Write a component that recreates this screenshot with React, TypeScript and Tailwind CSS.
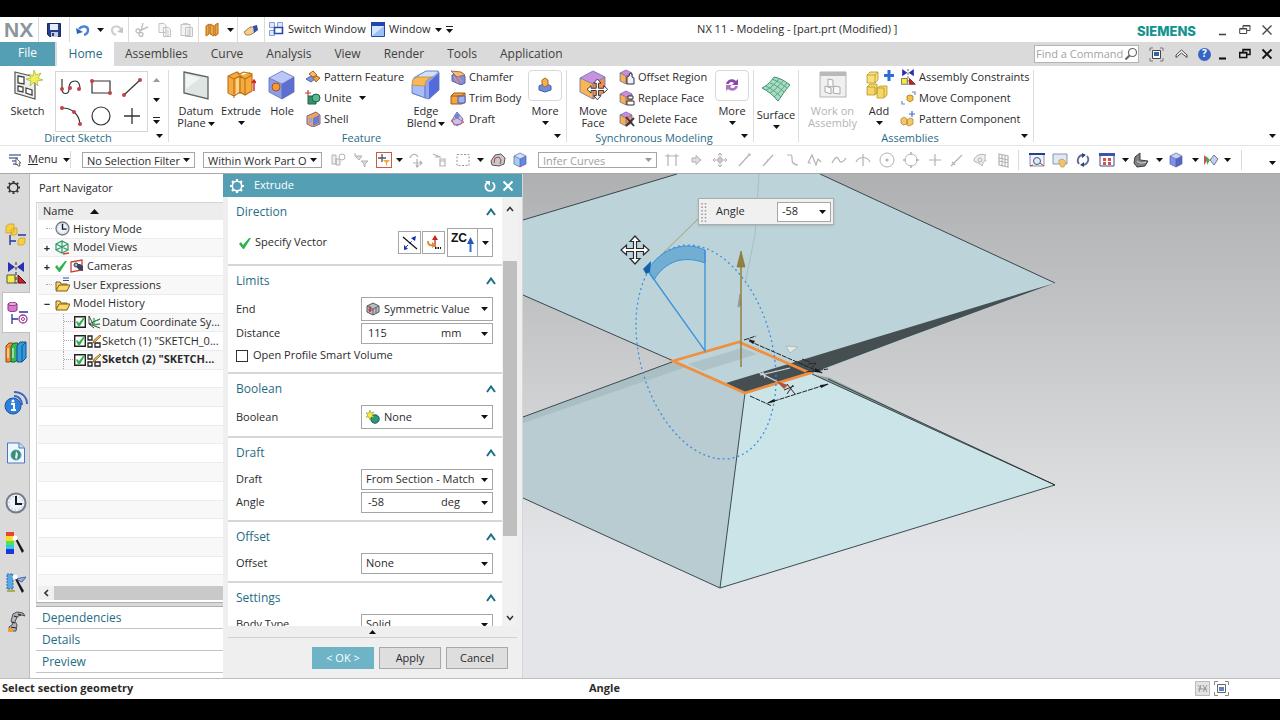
import { useState } from "react";
import type { ReactNode } from "react";

type IconProps = { w?: number; h?: number; children: ReactNode };

function Svg({ w = 16, h = 16, children }: IconProps) {
  return (
    <svg width={w} height={h} viewBox={`0 0 ${w} ${h}`} fill="none" className="shrink-0" aria-hidden="true">
      {children}
    </svg>
  );
}

function Caret({ up = false, muted = false }: { up?: boolean; muted?: boolean }) {
  return (
    <Svg w={7} h={4}>
      <path d={up ? "M0 4h7L3.500 0z" : "M0 0h7L3.500 4z"} fill={muted ? "#999" : "#111"} />
    </Svg>
  );
}

function Overflow() {
  return (
    <Svg w={7} h={7}>
      <path d="M0 .5h7" stroke="#222" />
      <path d="M0 3h7L3.500 7z" fill="#111" />
    </Svg>
  );
}

const cube = (top: string, left: string, right: string) => (
  <>
    <path d="M2 8 15 1l12 6-12 7z" fill={top} />
    <path d="M2 8l13 6v15L2 22z" fill={left} />
    <path d="M27 7l-12 7v15l12-7z" fill={right} />
    <path d="M2 8 15 1l12 6v15l-12 7-13-7zM2 8l13 6 12-7M15 14v15" stroke="#6070a8" strokeWidth=".8" />
  </>
);

const smallCube = (top: string, left: string, right: string) => (
  <>
    <path d="M1 4l6-3 6 3-6 3z" fill={top} />
    <path d="M1 4l6 3v8l-6-3z" fill={left} />
    <path d="M13 4L7 7v8l6-3z" fill={right} />
    <path d="M1 4l6-3 6 3v8l-6 3-6-3zM1 4l6 3 6-3M7 7v8" stroke="#5a629a" strokeWidth=".7" />
  </>
);

const moveArrows = (
  <path
    d="M14 0l5 5.500h-3.500v7h7V9l5.500 5-5.500 5v-3.500h-7v7H19L14 28l-5-5.500h3.500v-7h-7V19L0 14l5.500-5v3.500h7v-7H9z"
    fill="#fff"
    stroke="#2b2b2b"
    strokeWidth="1.200"
  />
);

/* ---------- quick access icons ---------- */

const saveIcon = (
  <Svg w={14} h={14}>
    <path d="M.5.5h13v13h-11l-2-2z" fill="#24408c" stroke="#172a5e" />
    <path d="M3 1h8v6H3z" fill="#e6ecfa" />
    <path d="M4 9h7v5H4z" fill="#c3cce0" />
    <path d="M5 10h2v3H5z" fill="#24408c" />
  </Svg>
);
const undoIcon = (
  <Svg w={14} h={12}>
    <path d="M3 5c3-4 9-3 9 1 0 2-1 4-4 5" stroke="#4a86d8" strokeWidth="2.400" />
    <path d="M0 4l7 4-6 2z" fill="#2d66b8" />
  </Svg>
);
const redoIcon = (
  <Svg w={14} h={12}>
    <path d="M11 5C8 1 2 2 2 6c0 2 1 4 4 5" stroke="#d0d0d0" strokeWidth="2.200" />
    <path d="M13 3l-6 5 6 1z" fill="#c4c4c4" />
  </Svg>
);
const cutIcon = (
  <Svg w={14} h={14}>
    <path d="M8 0L6 8M13 4L4 8" stroke="#c0c0c0" strokeWidth="1.400" />
    <circle cx="3" cy="8" r="2" stroke="#c0c0c0" strokeWidth="1.300" />
    <circle cx="6" cy="11.500" r="2" stroke="#c0c0c0" strokeWidth="1.300" />
  </Svg>
);
const copyIcon = (
  <Svg w={14} h={14}>
    <path d="M1 .5h5l2 2v7H1zM5.500 4.500h5l2 2v7h-7z" fill="#f6f6f6" stroke="#c2c2c2" />
    <path d="M7 8h4M7 10h4M7 12h4" stroke="#ccc" />
  </Svg>
);
const pasteIcon = (
  <Svg w={14} h={15}>
    <path d="M1 2.500h9v11H1zM5.500 5.500h7v9h-7z" fill="#f4f4f4" stroke="#c2c2c2" />
    <path d="M3 1h5v2H3z" fill="#c8c8c8" />
    <path d="M7 8h4M7 10h4M7 12h4" stroke="#ccc" />
  </Svg>
);
const foldIcon = (
  <Svg w={14} h={14}>
    <path d="M1 3l3-2v10l-3 2zM5 1l4 2v10l-4-2zM10 2l3-2v11l-3 2z" fill="#f0a43c" stroke="#b56a14" />
  </Svg>
);
const handIcon = (
  <Svg w={16} h={12}>
    <path d="M1 8l6-5h5v5l-5 3H3z" fill="#f0cf95" stroke="#8f6a2a" strokeWidth=".8" />
    <path d="M10 2l4-1 1 5-4 3z" fill="#2e50b4" />
  </Svg>
);
const switchIcon = (
  <Svg w={15} h={15}>
    <path d="M.5.500h5v5h-5zM8.500.500h5v5h-5zM.5 8.500h5v5h-5z" fill="#dce8fa" stroke="#8ba0cf" />
    <path d="M5.500 5.500h8v6h-8z" fill="#fff" stroke="#2548ad" strokeWidth="1.600" />
  </Svg>
);
const windowIcon = (
  <Svg w={14} h={15}>
    <path d="M.500.500h13v14H.5z" fill="#d5e6fb" stroke="#2447ae" />
    <path d="M0 0h14v4H0z" fill="#2447ae" />
    <path d="M1 14L13 4v10z" fill="#9dc0f3" />
  </Svg>
);

/* ---------- ribbon icons ---------- */

const sketchIcon = (
  <Svg w={30} h={30}>
    <path d="M2 2l20 5v22L2 23z" fill="#eef0f0" stroke="#555" strokeWidth="1.200" />
    <path d="M5 6l6 1v7l-6-1zM5 16l5 1v5l-5-1zM13 18l6 2v5l-6-2z" fill="#fff" stroke="#444" strokeWidth="1.300" />
    <path d="M21 0l2 5 5-2-3 5 5 2-6 1 1 5-4-4-4 4 1-5-5-2 5-1-2-4 4 2z" fill="#f0ef5a" stroke="#9fb43a" strokeWidth=".7" />
  </Svg>
);
const datumIcon = (
  <Svg w={30} h={30}>
    <path d="M3 2l24 5v22L3 23z" fill="#dfe5e3" stroke="#5c6462" strokeWidth="1.300" />
    <path d="M5 4l14 4L5 19z" fill="#f1f5f4" />
  </Svg>
);
const extrudeIcon = (
  <Svg w={30} h={30}>
    <path d="M2 6l10-4 5 3 7-3 2 2v17l-7 4-6-3-6 3-5-3z" fill="#f5ab3e" />
    <path d="M2 6l6 3 6-3 5 3 7-4M8 9v19M14 6v18M19 9v16M2 6v17l6 3 6-4 5 3 7-4V4l-8-2-5 2-2-2z" stroke="#bb6f16" strokeWidth="1.100" />
    <path d="M10 9l3-1v14l-3 2z" fill="#fcd389" />
    <path d="M28 21V11M26 13l2-3 2 3" stroke="#c22" strokeWidth="1.400" />
  </Svg>
);
const holeIcon = (
  <Svg w={30} h={30}>
    {cube("#b9c8f8", "#8c9cec", "#5e6ed2")}
    <circle cx="9" cy="17" r="4" fill="#f59a36" stroke="#a6571a" />
  </Svg>
);
const edgeBlendIcon = (
  <Svg w={30} h={30}>
    <path d="M1 13c0-6 4-8 8-8l6-4h13v18l-10 10L1 24z" fill="#8ea6ef" />
    <path d="M18 12L28 3v17l-10 9z" fill="#556bdb" />
    <path d="M1 15h12v12L1 23z" fill="#a9bdf5" />
    <path d="M6 5l9-4h13l-7 6H8z" fill="#cfe2f8" />
    <path d="M1 15c0-6 3-8 7-8h14c-5 1-8 4-8 9z" fill="#f7b857" stroke="#cc8830" strokeWidth=".8" />
    <path d="M1 15v8l13 5 4 1 10-9V3l-1-2H15L6 6M14 16v12" stroke="#6178b8" strokeWidth=".9" />
  </Svg>
);
const moveFaceIcon = (
  <Svg w={30} h={30}>
    {cube("#c793e0", "#f8b455", "#ef8d58")}
    <g transform="translate(9 9) scale(.740)">{moveArrows}</g>
  </Svg>
);
const surfaceIcon = (
  <Svg w={30} h={26}>
    <path d="M1 12C7 9 10 5 13 1c6 1 11 4 16 8-3 3-7 9-12 16C12 19 7 15 1 12z" fill="#a6dcc0" stroke="#418c6e" />
    <path d="M5 14c6-2 9-7 13-11M9 17c6-3 9-8 13-12M13 21c5-4 8-8 13-14M5 10c6 3 11 7 15 11M9 7c6 2 11 6 14 9M11 3c6 2 11 6 15 9" stroke="#5ba483" />
  </Svg>
);
const workIcon = (
  <Svg w={28} h={28}>
    <path d="M1 1h26v25H1z" fill="#f0f0f0" stroke="#b4b4b4" />
    <path d="M1 1h26v4H1z" fill="#b9b9b9" />
    <path d="M9 8l5 1v7l-5-1zM6 15l6 2v6l-6-2zM15 15l6 1v7l-7-1z" fill="#fafafa" stroke="#a9a9a9" />
  </Svg>
);
const addIcon = (
  <Svg w={30} h={30}>
    <g stroke="#b9942e" strokeWidth=".8">
      <path d="M3 5l3-3h8v8l-3 3H3z" fill="#f8e07a" />
      <path d="M3 17l3-3h7v9l-2 2H3zM13 18l3-2h7v9l-3 3h-7z" fill="#f4d766" />
      <path d="M3 5h8v8M11 5l3-3M3 17h8v8M13 18h7v9" />
    </g>
    <path d="M25 0v11M20 5.500h11" stroke="#2d6fd2" strokeWidth="3" />
  </Svg>
);

const patternFeature = (
  <Svg>
    <path d="M1 10l5-3 4 3-4 3z" fill="#7c94e8" stroke="#5067ac" />
    <path d="M8 9l4-2 3 2-4 4z" fill="#f3a13f" stroke="#a4651d" />
    <path d="M4 5l4-3 4 4-4 2z" fill="#f7bd68" stroke="#a4651d" />
  </Svg>
);
const unite = (
  <Svg>
    <path d="M3 6h8v8H3z" fill="#35936b" stroke="#1f6244" />
    <circle cx="11" cy="8" r="4" fill="#58b78c" stroke="#1f6244" />
    <path d="M3 0v6M0 3h6" stroke="#c23b3b" strokeWidth="1.200" />
  </Svg>
);
const shell = (
  <Svg>
    <path d="M2 5l9-4 4 3v9l-7 3-6-3z" fill="#f0a751" stroke="#7c5f8e" />
    <path d="M8 7l6-3v8l-6 3z" fill="#6b7bd8" />
    <path d="M4 7h3v5H4z" fill="#8fa4ee" />
  </Svg>
);
const chamfer = (
  <Svg>
    <path d="M2 6l9-2 4 3v7l-4 2-9-4z" fill="#7a8de0" stroke="#56629c" />
    <path d="M1 2l10 1 4 3-8 2z" fill="#f5bc7c" stroke="#a56848" />
    <path d="M4 8l4 6M8 8l4 5" stroke="#dc8f7a" strokeWidth="1.500" />
  </Svg>
);
const trimBody = (
  <Svg>
    <path d="M1 6l3-3h11v9l-3 2H1z" fill="#f4a63e" stroke="#a4571d" />
    <path d="M8 6h7v7H8z" fill="#9db2f3" stroke="#4960ac" />
    <path d="M1 6h11l3-3" stroke="#a4571d" />
  </Svg>
);
const draftIcon = (
  <Svg>
    <path d="M7 1l6 7-2 5-7 1-2-5z" fill="#c8c4ee" stroke="#7b70a4" />
    <path d="M1 10l6-3 7 4-7 4z" stroke="#c06a78" />
    <circle cx="7" cy="5" r="2.500" fill="#6e85dc" />
  </Svg>
);
const moreFeature = (
  <Svg>
    <path d="M2 9l6-3 6 3v4l-6 2-6-2z" fill="#6b8ee2" stroke="#43609e" />
    <path d="M5 6V3l3-2 3 2v5l-3 2-2-1z" fill="#f4b055" stroke="#b0691d" />
  </Svg>
);
const moreSync = (
  <Svg>
    <path d="M2 7c1-5 7-6 10-3l2-2v6H8l2-2C8 4 5 5 5 7z" fill="#8b46a8" />
    <path d="M14 9c-1 5-7 6-10 3l-2 2V8h6l-2 2c2 2 5 1 5-1z" fill="#ad72c4" />
  </Svg>
);
const offsetRegion = (
  <Svg>
    {smallCube("#cf8ae0", "#f7b04e", "#ec8c6a")}
    <path d="M8 8l2-1 1-3 2 1v3l2 1v6H8z" fill="#eef" stroke="#333" />
  </Svg>
);
const replaceFace = (
  <Svg>
    {smallCube("#cf8ae0", "#f7b04e", "#ec8c6a")}
    <path d="M9 6h5v3H9zM8 11h7v4H8z" fill="#fff" stroke="#333" />
  </Svg>
);
const deleteFace = (
  <Svg>
    {smallCube("#cf8ae0", "#f7b04e", "#ec8c6a")}
    <path d="M7 6l8 9M15 7l-8 8" stroke="#333" strokeWidth="1.800" />
  </Svg>
);
const constraintIcon = (s: number) => (
  <svg width={s} height={s} viewBox="0 0 20 22" fill="none" className="shrink-0" aria-hidden="true">
    <path d="M2 0l7 5-7 5zM18 0l-7 5 7 5z" fill="#2a30b5" />
    <path d="M10 0v22" stroke="#222" strokeDasharray="3 2" />
    <path d="M1 13h8v8H1z" fill="#f8ec3c" stroke="#555" />
    <path d="M12 13l8 8h-8z" fill="#cb2323" stroke="#5b1010" />
  </svg>
);
const moveComp = (
  <Svg>
    <path d="M7 6l3-1 3 1v4l-3 2-3-2z" fill="#f2c24a" stroke="#a27a1d" strokeWidth=".8" />
    <path d="M2 11v3h3M12 2h3v3" stroke="#6c86c0" strokeWidth="1.200" />
  </Svg>
);
const patternComp = (
  <Svg>
    <path d="M1 8l3-2 3 2v5l-4 1-2-2zM7 9l3-2 3 1v5l-4 2-2-1z" fill="#f2c766" stroke="#b58636" strokeWidth=".8" />
    <path d="M12 0v6M9 3h6" stroke="#3a6dcc" strokeWidth="1.200" />
  </Svg>
);

/* ---------- gallery ---------- */

const dot = (x: number, y: number) => <circle key={`${x}-${y}`} cx={x} cy={y} r="2" fill="#c4404a" />;

const gallery = [
  {
    label: "Profile",
    icon: (
      <Svg w={22} h={20}>
        <path d="M2 2v10c0 6 7 6 7 0s2-8 6-8 5 4 5 8" stroke="#333" strokeWidth="1.200" />
        {dot(2, 12)}
        {dot(10, 11)}
        {dot(19, 12)}
      </Svg>
    ),
  },
  {
    label: "Rectangle",
    icon: (
      <Svg w={22} h={20}>
        <path d="M2 4h18v12H2z" stroke="#333" strokeWidth="1.200" />
        {dot(2, 4)}
        {dot(20, 16)}
      </Svg>
    ),
  },
  {
    label: "Line",
    icon: (
      <Svg w={22} h={20}>
        <path d="M3 18L19 3" stroke="#333" strokeWidth="1.200" />
        {dot(3, 18)}
        {dot(19, 3)}
      </Svg>
    ),
  },
  {
    label: "Arc",
    icon: (
      <Svg w={22} h={20}>
        <path d="M2 2c10 0 17 6 18 16" stroke="#333" strokeWidth="1.200" />
        {dot(2, 2)}
        {dot(14, 6)}
        {dot(20, 18)}
      </Svg>
    ),
  },
  {
    label: "Circle",
    icon: (
      <Svg w={22} h={20}>
        <circle cx="11" cy="10" r="9" stroke="#333" strokeWidth="1.200" />
      </Svg>
    ),
  },
  {
    label: "Point",
    icon: (
      <Svg w={22} h={20}>
        <path d="M11 2v16M3 10h16" stroke="#333" strokeWidth="1.300" />
      </Svg>
    ),
  },
];

/* ---------- selection bar icons ---------- */

const grey = "#b2b2b2";
const line = (d: string, color = grey) => (
  <Svg>
    <path d={d} stroke={color} strokeWidth="1.200" />
  </Svg>
);

const snapIcons = [
  { label: "Snap Handles", w: "w-6", icon: line("M4 2v12M12 2v12M1 4h14") },
  { label: "Follow", w: "w-6", icon: <Svg><path d="M4 6h4V3.500l5 4.500-5 4.500V10H4z" fill="#ddd" stroke={grey} /></Svg> },
  { label: "Move Point", w: "w-6", icon: <Svg><path d="M8 1v14M1 8h14M6 3l2-2 2 2M6 13l2 2 2-2M3 6L1 8l2 2M13 6l2 2-2 2M6 6h4v4H6z" stroke={grey} /></Svg> },
  { label: "End Point", w: "w-6", icon: line("M3 14L13 3M12 2h2v2") },
  { label: "Mid Point", w: "w-6", icon: line("M3 14L13 3M7 8h2") },
  { label: "Control Point", w: "w-[23px]", icon: line("M3 3h4c2 0 0 6 2 8 1 1 2 2 5 2") },
  { label: "Pole", w: "w-6", icon: line("M1 11l4-8 4 10 2-6 3 3M1 11h3") },
  { label: "Curve Point", w: "w-6", icon: line("M1 11c4-8 6-6 7-3s4 3 7-2") },
  { label: "Intersection", w: "w-6", icon: line("M8 2v12M1 10c3-6 11-6 14 0") },
  { label: "Arc Center", w: "w-6", icon: <Svg><circle cx="8" cy="8" r="7" stroke={grey} /><circle cx="8" cy="8" r="1.500" fill={grey} /></Svg> },
  { label: "Quadrant", w: "w-6", icon: <Svg><circle cx="8" cy="8" r="6" stroke={grey} /><path d="M8 0v3M8 13v3M0 8h3M13 8h3" stroke={grey} strokeWidth="1.500" /></Svg> },
  { label: "Existing Point", w: "w-[23px]", icon: line("M8 2v12M2 8h12") },
  { label: "Point on Curve", w: "w-[22px]", icon: line("M2 14L13 3M3 10l3 3") },
  { label: "Point on Face", w: "w-6", icon: <Svg><path d="M2 9c0-5 6-8 12-6-2 2-1 4 0 6-3-1-3 3-4 5-2-3-5-3-8-5z" fill="#eee" stroke={grey} /><circle cx="8" cy="8" r="2" stroke={grey} /></Svg> },
  { label: "Grid Point", w: "w-[22px]", icon: line("M4 2l9 2v11l-9-2zM7 3v11M10 3v11M4 6l9 2M4 9l9 2") },
];

const fitIcon = (
  <Svg>
    <path d="M1 2h14v12H1z" fill="#eef2fb" stroke="#8a94b8" />
    <path d="M0 1h16v2H0z" fill="#24408c" />
    <circle cx="8" cy="9" r="3.500" fill="#d8ecfa" stroke="#556" />
    <path d="M1 14l3-1M15 14l-4-3" stroke="#c33" />
  </Svg>
);
const panIcon = (
  <Svg>
    <path d="M1 2h14v10H1z" fill="#dfe8f6" stroke="#8a96ae" />
    <path d="M7 8l4-1 3 3-2 5H9l-2-4z" fill="#f1c36a" stroke="#c49a4a" strokeWidth=".7" />
  </Svg>
);
const rotateIcon = (
  <Svg>
    <path d="M4 12a5.500 5.500 0 0 1 4-9M12 4a5.500 5.500 0 0 1-4 9" stroke="#5b6ba5" strokeWidth="1.800" />
    <path d="M7 1l4 2-4 3zM9 10l-4 3 4 2z" fill="#33437c" />
  </Svg>
);
const layoutIcon = (
  <Svg>
    <path d="M1 2h14v12H1z" fill="#fff" stroke="#3b4d92" />
    <path d="M0 1h16v3H0z" fill="#3b55ad" />
    <path d="M4 6h3v3H4zM9 6h3v3H9zM4 10h3v3H4zM9 10h3v3H9z" fill="#d35248" />
  </Svg>
);
const renderIcon = (
  <Svg>
    <path d="M2 5l5-4v7l8 1-3 5-8 1-3-4z" fill="#7d8084" stroke="#3a3c40" />
    <path d="M4 9c3 3 6 2 9 1" stroke="#ddd" />
  </Svg>
);
const shadedCube = <Svg>{smallCube("#c7d2fb", "#8093ea", "#5566c8")}</Svg>;
const clipIcon = (
  <Svg>
    <path d="M1 3l4 4-4 6z" fill="#d94a4a" />
    <path d="M3 4l4 4-3 5z" fill="#4aa85a" />
    <path d="M7 8l4-5 4 4-4 6z" fill="#c3d0ea" stroke="#66789e" />
  </Svg>
);
const viewIcons = [
  { label: "Fit", w: "w-[23px]", icon: fitIcon, caretW: "" },
  { label: "Pan", w: "w-[23px]", icon: panIcon, caretW: "" },
  { label: "Rotate", w: "w-6", icon: rotateIcon, caretW: "" },
  { label: "Layout", w: "w-6", icon: layoutIcon, caretW: "w-3" },
  { label: "Rendering Style", w: "w-5", icon: renderIcon, caretW: "w-4" },
  { label: "Orient View", w: "w-5", icon: shadedCube, caretW: "w-4" },
  { label: "Clip Section", w: "w-4", icon: clipIcon, caretW: "w-4" },
];

/* ---------- resource bar ---------- */

const gearIcon = (color: string, s = 14) => (
  <svg width={s} height={s} viewBox="0 0 14 14" fill="none" aria-hidden="true">
    <circle cx="7" cy="7" r="4.700" stroke={color} strokeWidth="1.600" />
    <path d="M7 0v2M7 12v2M0 7h2M12 7h2M2 2l1.500 1.500M10.500 10.500L12 12M2 12l1.500-1.500M10.500 3.500L12 2" stroke={color} strokeWidth="2.200" />
  </svg>
);
const clock = (s: number) => (
  <svg width={s} height={s} viewBox="0 0 22 22" fill="none" className="shrink-0" aria-hidden="true">
    <circle cx="11" cy="11" r="9.500" fill="#eef2fa" stroke="#777d88" strokeWidth="2" />
    <circle cx="11" cy="11" r="7" stroke="#99a" strokeDasharray="1 2.660" />
    <path d="M11 4v8h6" stroke="#14181f" strokeWidth="2" />
  </svg>
);

const asmNav = (
  <Svg w={22} h={24}>
    <path d="M1 3l3-2h5v7l-2 2H1zM6 7l3-2h3v6l-2 1H6z" fill="#f6cf45" stroke="#c49a24" strokeWidth=".7" />
    <path d="M5 12v10M5 18h6M13 12h8" stroke="#25399a" strokeWidth="1.400" />
    <path d="M13 17l2-2h5v5l-2 2h-5z" fill="#f6cf45" stroke="#c49a24" strokeWidth=".7" />
  </Svg>
);
const partNav = (
  <Svg w={22} h={24}>
    <path d="M1 3v6c0 2 9 2 9 0V3z" fill="#d57bc8" stroke="#8c2f86" />
    <ellipse cx="5.500" cy="3" rx="4.500" ry="1.500" fill="#f0b9e8" stroke="#8c2f86" />
    <path d="M5 13v10M5 18h6M12 11h9" stroke="#25399a" strokeWidth="1.300" />
    <circle cx="16" cy="18" r="4" stroke="#a13a98" strokeWidth="1.300" />
    <circle cx="16" cy="18" r="1.500" stroke="#a13a98" />
  </Svg>
);
const booksIcon = (
  <Svg w={22} h={22}>
    <path d="M1 5l3-3h4v16l-3 3H1z" fill="#f28a2e" stroke="#8a4a12" />
    <path d="M6 5l3-3h4v16l-3 3H6z" fill="#35b558" stroke="#146a2c" />
    <path d="M12 5l3-4h6v16l-4 4h-5z" fill="#2f9be0" stroke="#174f86" />
    <path d="M17 5v16M17 5l4-4" stroke="#174f86" />
    <path d="M2 7h2v10H2zM7 7h2v10H7z" fill="#fff" fillOpacity=".5" />
  </Svg>
);
const infoIcon = (
  <Svg w={24} h={24}>
    <circle cx="9" cy="15" r="8" fill="#2e7fdc" stroke="#1b57a6" />
    <path d="M7 13h3v6M7 19h5" stroke="#fff" strokeWidth="2" />
    <circle cx="9" cy="10" r="1.500" fill="#fff" />
    <path d="M10 5c5 0 8 4 8 9M10 1c8 0 13 5 13 12" stroke="#3c65c0" strokeWidth="2" />
  </Svg>
);
const webIcon = (
  <Svg w={20} h={22}>
    <path d="M1.500 1h12l5 5v15h-17z" fill="#f2f7ff" stroke="#4a76c4" />
    <path d="M13 1v5h5" fill="#cfe0f7" stroke="#4a76c4" />
    <circle cx="10" cy="13" r="5" fill="#3a8e68" stroke="#4aa0d8" />
    <path d="M10 9l2 3-1 5-2-1z" fill="#dff3ea" />
  </Svg>
);
const wand = <path d="M9 5l2 0 8 14-2 2z" fill="#16181c" />;
const colorIcon = (
  <Svg w={22} h={22}>
    <path d="M1 0h8v5H1z" fill="#e8442c" />
    <path d="M1 4h8v5H1z" fill="#f8d92e" />
    <path d="M1 9h8v4H1z" fill="#56e04a" />
    <path d="M1 13h8v4H1z" fill="#30c8e8" />
    <path d="M1 17h8v5H1z" fill="#2036d8" />
    {wand}
    <circle cx="10" cy="6" r="2.500" fill="#fff" />
  </Svg>
);
const studioIcon = (
  <Svg w={22} h={22}>
    <path d="M2 2h6v15H2z" fill="#5ba7e4" stroke="#2c6cae" strokeDasharray="2 1" />
    <path d="M10 7l11-2-4 5z" fill="#93b4e2" stroke="#4669a8" />
    <path d="M2 19h8" stroke="#b7a84c" strokeWidth="2" />
    {wand}
    <circle cx="10" cy="5" r="2.500" fill="#fff" />
  </Svg>
);
const robotIcon = (
  <Svg w={20} h={22}>
    <path d="M7 3l4-2 6 1 2 3-3-1-4 1-3 5 2 4-1 6H4l-1-4 4-3-2-3z" fill="#b4b7bb" stroke="#4a4d52" />
    <path d="M12 3l3 1M8 5l3 1M6 11l3 1M5 16l5 1" stroke="#222" strokeWidth="1.200" />
    <path d="M2 17h5v4H2z" fill="#ef9c3c" />
  </Svg>
);

const resourceItems = [
  { label: "Assembly Navigator", icon: asmNav, cls: "mt-4 h-[38px]" },
  { label: "Constraint Navigator", icon: constraintIcon(22), cls: "h-[38px]" },
  { label: "Part Navigator", icon: partNav, cls: "h-[41px] ml-0.5 -mr-px bg-white border-y border-l border-[#c0c0c0]" },
  { label: "Reuse Library", icon: booksIcon, cls: "h-[38px]" },
  { label: "HD3D Tools", icon: infoIcon, cls: "mt-[7px] h-[50px]" },
  { label: "Web Browser", icon: webIcon, cls: "h-[50px]" },
  { label: "History", icon: clock(22), cls: "h-[50px]" },
  { label: "Process Studio", icon: colorIcon, cls: "h-[30px]" },
  { label: "System Materials", icon: studioIcon, cls: "h-[50px]" },
  { label: "Roles", icon: robotIcon, cls: "h-7" },
];

/* ---------- tree ---------- */

const check = (s = 12) => (
  <svg width={s} height={s} viewBox="0 0 12 12" fill="none" className="shrink-0" aria-hidden="true">
    <path d="M0 7l2-2 2 3 6-7 2 0-7 11H4z" fill="#2eb44c" />
  </svg>
);
const boxedCheck = (
  <Svg w={12} h={12}>
    <path d="M.7.700h10.600v10.600H.7z" fill="#fff" stroke="#222" strokeWidth="1.400" />
    <path d="M2 6l1-1 2 2 4-5 2 0-5 8H4z" fill="#2eb44c" />
  </Svg>
);
const viewsIcon = (
  <Svg w={15} h={15}>
    <path d="M1 4l6-3 6 3v6l-6 3-6-3zM1 4l6 3 6-3M7 7v6M7 1v6M1 10l6-3 6 3" stroke="#2b9a64" strokeWidth="1.200" />
    <path d="M8 14l6-1" stroke="#d3472e" strokeWidth="1.500" />
  </Svg>
);
const cameraIcon = (
  <Svg w={14} h={14}>
    <path d="M1 3l11-2v10L1 13z" stroke="#c8413b" strokeWidth="1.300" />
    <path d="M4 5h6l3 2v5l-4-1z" fill="#3b4163" />
    <circle cx="6" cy="6" r="2" fill="#9db6e6" stroke="#333" />
  </Svg>
);
const folderIcon = (
  <Svg w={15} h={14}>
    <path d="M1 12V4h4l1 2h6v2" fill="#f7d779" stroke="#7c5c14" />
    <path d="M1 13l3-6h11l-3 6z" fill="#fbd765" stroke="#7c5c14" />
  </Svg>
);
const exprFolder = (
  <Svg w={15} h={15}>
    <path d="M1 13V5h4l1 2h6v2" fill="#f7d779" stroke="#7c5c14" />
    <path d="M1 14l3-6h11l-3 6z" fill="#fbd765" stroke="#7c5c14" />
    <path d="M8 1h6M8 3.500h6" stroke="#3c4a9a" strokeWidth="1.200" />
  </Svg>
);
const csysIcon = (
  <Svg w={14} h={14}>
    <path d="M2 1v8l11 4M2 9L13 4M2 1l4 8M2 9l5 4" stroke="#444" />
    <path d="M6 7l7-3M7 3v6M5 10l8-1" stroke="#3a9a58" strokeWidth="1.300" />
  </Svg>
);
const sketchNode = (
  <Svg w={14} h={14}>
    <path d="M1 2h4v4H1zM1 9h4v4H1zM8 9h5v4H8z" stroke="#222" strokeWidth="1.300" />
    <path d="M6 9l1-3 6-5 1 1-6 6z" fill="#f2bc4c" stroke="#6e4d10" strokeWidth=".7" />
  </Svg>
);

type Node = { label: string; expand?: string; icons: ReactNode; child?: boolean; bold?: boolean };
const nodes: Node[] = [
  { label: "History Mode", icons: clock(15) },
  { label: "Model Views", expand: "+", icons: viewsIcon },
  { label: "Cameras", expand: "+", icons: <>{check()}{cameraIcon}</> },
  { label: "User Expressions", icons: exprFolder },
  { label: "Model History", expand: "−", icons: folderIcon },
  { label: "Datum Coordinate Sy...", child: true, icons: <>{boxedCheck}{csysIcon}</> },
  { label: 'Sketch (1) "SKETCH_0...', child: true, icons: <>{boxedCheck}{sketchNode}</> },
  { label: 'Sketch (2) "SKETCH...', child: true, bold: true, icons: <>{boxedCheck}{sketchNode}</> },
];
const emptyRows = Array.from({ length: 12 }, (_, i) => i);

/* ---------- shared pieces ---------- */

function IconButton({ label, className, children }: { label: string; className: string; children: ReactNode }) {
  return (
    <button type="button" aria-label={label} className={`flex shrink-0 items-center justify-center ${className}`}>
      {children}
    </button>
  );
}

type SelectProps = {
  label: string;
  value: string;
  className: string;
  disabled?: boolean;
  icon?: ReactNode;
  id?: string;
};

function Select({ label, value, className, disabled, icon, id }: SelectProps) {
  return (
    <div className={`relative flex shrink-0 items-center border border-[#a6a6a6] bg-white ${className}`}>
      {icon && <span className="ml-1 flex">{icon}</span>}
      <select
        id={id}
        aria-label={label}
        disabled={disabled}
        className={`h-full w-full min-w-0 appearance-none overflow-hidden bg-transparent pr-3 pl-1 outline-none ${disabled ? "text-[#a0a0a0]" : ""}`}
      >
        <option>{value}</option>
      </select>
      <span className="pointer-events-none absolute inset-y-0 right-1 flex items-center">
        <Caret muted={disabled} />
      </span>
    </div>
  );
}

function BigButton({ lines, icon, caret, width, muted }: { lines: string[]; icon: ReactNode; caret?: boolean; width: string; muted?: boolean }) {
  const wraps = lines.length > 1;
  return (
    <button type="button" className={`flex shrink-0 flex-col items-center pt-1 leading-3 ${width} ${muted ? "text-[#b4b4b4]" : ""}`}>
      <span className="mb-[5px] flex h-[30px] items-center">{icon}</span>
      <span className="text-center whitespace-pre">
        {lines.join("\n")}
        {caret && wraps && <span className="ml-0.5 inline-flex align-middle"><Caret /></span>}
      </span>
      {caret && !wraps && <span className="flex h-3 items-center"><Caret /></span>}
    </button>
  );
}

type Small = { label: string; icon: ReactNode; caret?: boolean };

function SmallColumn({ items, width }: { items: Small[]; width: string }) {
  return (
    <div className={`flex shrink-0 flex-col gap-px pt-px ${width}`}>
      {items.map((item) => (
        <button key={item.label} type="button" className="flex h-5 items-center gap-[3px] whitespace-nowrap">
          {item.icon}
          <span>{item.label}</span>
          {item.caret && <span className="ml-1 flex"><Caret /></span>}
        </button>
      ))}
    </div>
  );
}

function MoreButton({ icon, width }: { icon: ReactNode; width: string }) {
  return (
    <BigButton
      lines={["More"]}
      caret
      width={width}
      icon={<span className="flex h-[31px] w-[34px] items-center justify-center rounded-sm border border-[#d8d8d8]">{icon}</span>}
    />
  );
}

function Group({ title, width, menu, children }: { title?: string; width: string; menu?: boolean; children: ReactNode }) {
  return (
    <section className={`relative flex shrink-0 flex-col ${width}`}>
      <div className="flex h-[66px]">{children}</div>
      <div className="flex h-3 items-center justify-end">
        <h2 className="flex-1 text-center leading-3 text-[#1f6c85]">{title}</h2>
        {menu && <button type="button" aria-label={`${title} options`} className="mr-1.5 mb-1"><Caret /></button>}
      </div>
      <span className="absolute top-1 right-0 h-[72px] w-px bg-[#dcdcdc]" />
    </section>
  );
}

/* ---------- bars ---------- */

const sep = "border-l border-[#dadada]";

const winIcons = (color: string, sw: number) => [
  { label: "Minimize", icon: <Svg w={10} h={12}><path d="M1 10.500h7" stroke={color} strokeWidth={sw + 0.6} /></Svg> },
  { label: "Restore", icon: <Svg w={12} h={12}><path d="M4 4V1.500h7v5H8M.7 4.500h7v5h-7z" stroke={color} strokeWidth={sw} /><path d="M1 5h7M4 2h7" stroke={color} /></Svg> },
  { label: "Close", icon: <Svg w={12} h={12}><path d="M1.500 1.500l9 9M10.500 1.500l-9 9" stroke={color} strokeWidth={sw + 0.4} /></Svg> },
];

function WindowControls({ strong = false }: { strong?: boolean }) {
  return (
    <div className="flex pr-0.5">
      {winIcons(strong ? "#111" : "#444", strong ? 1.5 : 1).map((b) => (
        <IconButton key={b.label} label={b.label} className="w-[22px]">{b.icon}</IconButton>
      ))}
    </div>
  );
}

function TitleBar() {
  return (
    <header className="relative flex h-[25px] shrink-0 items-stretch bg-white">
      <span className="w-[38px] shrink-0 pl-1 font-['Liberation_Sans'] text-[21px] leading-[26px] font-bold text-[#8a969d]">NX</span>
      <IconButton label="Save" className={`w-[31px] ${sep}`}>{saveIcon}</IconButton>
      <IconButton label="Undo" className={`w-[26px] ${sep}`}>{undoIcon}</IconButton>
      <IconButton label="Undo list" className="w-2.5"><Caret /></IconButton>
      <IconButton label="Redo" className="w-[23px]">{redoIcon}</IconButton>
      <IconButton label="Cut" className={`w-[26px] ${sep}`}>{cutIcon}</IconButton>
      <IconButton label="Copy" className="w-[22px]">{copyIcon}</IconButton>
      <IconButton label="Paste" className="w-[22px]">{pasteIcon}</IconButton>
      <IconButton label="Repeat Extrude" className={`w-[26px] ${sep}`}>{foldIcon}</IconButton>
      <IconButton label="Repeat list" className="w-[13px]"><Caret /></IconButton>
      <IconButton label="Touch Mode" className={`w-[27px] ${sep}`}>{handIcon}</IconButton>
      <button type="button" className={`flex w-[107px] shrink-0 items-center gap-1 pl-1 whitespace-nowrap ${sep}`}>
        {switchIcon}
        Switch Window
      </button>
      <button type="button" className="flex shrink-0 items-center gap-1 whitespace-nowrap">
        {windowIcon}
        <span>Window</span>
        <Caret />
      </button>
      <IconButton label="Customize" className="w-4"><Overflow /></IconButton>
      <h1 className="flex flex-1 items-center justify-center">NX 11 - Modeling - [part.prt (Modified) ]</h1>
      <span className="flex w-[75px] shrink-0 items-center pt-1 font-['Inter'] text-[13px] font-extrabold text-[#12938f]">SIEMENS</span>
      <WindowControls />
    </header>
  );
}

const tabs = ["Assemblies", "Curve", "Analysis", "View", "Render", "Tools", "Application"];

function TabBar() {
  return (
    <nav className="flex h-6 shrink-0 items-stretch bg-[#dadada] text-xs text-[#404040]">
      <button type="button" className="w-[55px] bg-[#559fb5] pb-0.5 text-white">File</button>
      <button type="button" className="ml-0.5 w-[57px] bg-white text-[#1f6c85]">Home</button>
      {tabs.map((tab) => (
        <button key={tab} type="button" className="pr-3 pl-[11px]">{tab}</button>
      ))}
      <div className="flex-1" />
      <label className="my-[3px] flex w-[105px] items-center border border-[#b4b4b4] bg-white text-[11px]">
        <input aria-label="Find a Command" placeholder="Find a Command" className="min-w-0 flex-1 pl-px outline-none placeholder:text-[#a4a4a4]" />
        <Svg w={14} h={14}>
          <circle cx="8.500" cy="5.500" r="4" stroke="#666" strokeWidth="1.200" />
          <path d="M5.500 8.500l-4 4" stroke="#666" strokeWidth="2.200" />
        </Svg>
      </label>
      <IconButton label="Full Screen" className="ml-2 w-[18px]">
        <Svg w={15} h={15}>
          <path d="M1 4V1h3M11 1h3v3M14 11v3h-3M4 14H1v-3" stroke="#777" />
          <path d="M3.500 3.500h8v8h-8z" fill="#fff" stroke="#444" />
          <path d="M5 5h5v4H5z" fill="#2d62b4" />
        </Svg>
      </IconButton>
      <IconButton label="Minimize Ribbon" className="w-8">
        <Svg w={13} h={10}><path d="M1 6l5.500-5L12 6v2.500L6.500 4 1 8.500z" fill="#fff" stroke="#444" /></Svg>
      </IconButton>
      <IconButton label="Help" className="w-[15px]">
        <span className="flex size-[13px] items-center justify-center rounded-full bg-[#3565c4] text-[10px] font-bold text-white">?</span>
      </IconButton>
      <WindowControls strong />
    </nav>
  );
}

function Ribbon() {
  return (
    <div className="flex h-[79px] shrink-0 overflow-hidden bg-white">
      <Group title="Direct Sketch" width="w-[169px]" menu>
        <BigButton lines={["Sketch"]} icon={sketchIcon} width="w-[55px]" />
        <div className="mt-[5px] grid h-[61px] w-[93px] grid-cols-3 border border-[#d6d6d6]">
          {gallery.map((g) => (
            <button key={g.label} type="button" aria-label={g.label} className="flex items-center justify-center">{g.icon}</button>
          ))}
        </div>
        <div className="mt-3 flex w-4 flex-col items-center justify-between pb-2">
          <Caret up muted />
          <Caret />
          <Overflow />
        </div>
      </Group>
      <Group title="Feature" width="w-[398px]" menu>
        <BigButton lines={["Datum", "Plane"]} icon={datumIcon} caret width="w-[54px]" />
        <BigButton lines={["Extrude"]} icon={extrudeIcon} caret width="w-9" />
        <BigButton lines={["Hole"]} icon={holeIcon} width="w-[46px]" />
        <SmallColumn
          width="w-[97px]"
          items={[
            { label: "Pattern Feature", icon: patternFeature },
            { label: "Unite", icon: unite, caret: true },
            { label: "Shell", icon: shell },
          ]}
        />
        <BigButton lines={["Edge", "Blend"]} icon={edgeBlendIcon} caret width="w-[48px]" />
        <SmallColumn
          width="w-[75px]"
          items={[
            { label: "Chamfer", icon: chamfer },
            { label: "Trim Body", icon: trimBody },
            { label: "Draft", icon: draftIcon },
          ]}
        />
        <MoreButton icon={moreFeature} width="w-10" />
      </Group>
      <Group title="Synchronous Modeling" width="w-[187px]" menu>
        <BigButton lines={["Move", "Face"]} icon={moveFaceIcon} width="w-[52px]" />
        <SmallColumn
          width="w-[95px]"
          items={[
            { label: "Offset Region", icon: offsetRegion },
            { label: "Replace Face", icon: replaceFace },
            { label: "Delete Face", icon: deleteFace },
          ]}
        />
        <MoreButton icon={moreSync} width="w-9" />
      </Group>
      <Group width="w-[45px]">
        <div className="pt-1">
          <BigButton lines={["Surface"]} icon={surfaceIcon} caret width="w-11" />
        </div>
      </Group>
      <Group title="Assemblies" width="w-[235px]" menu>
        <BigButton lines={["Work on", "Assembly"]} icon={workIcon} width="w-[67px]" muted />
        <BigButton lines={["Add"]} icon={addIcon} caret width="w-[26px]" />
        <SmallColumn
          width="w-[132px] ml-2"
          items={[
            { label: "Assembly Constraints", icon: constraintIcon(16) },
            { label: "Move Component", icon: moveComp },
            { label: "Pattern Component", icon: patternComp },
          ]}
        />
      </Group>
      <div className="flex flex-1 items-end justify-end pr-1 pb-[7px]"><Caret /></div>
    </div>
  );
}

function SelectionBar() {
  return (
    <div className="flex h-7 shrink-0 items-center overflow-hidden border-t border-[#e4e4e4] bg-white">
      <button type="button" className="flex w-[71px] shrink-0 items-center gap-[5px] border-r border-[#dadada] pl-2">
        <Svg w={15} h={14}>
          <path d="M1 2h12M1 5h9M4 8h6M5 11h5" stroke="#66759c" strokeWidth="1.400" />
          <path d="M8 5l5 5-2 0 1 3-2 0-1-2-1 1z" fill="#fff" stroke="#444" strokeWidth=".8" />
        </Svg>
        <span><span className="underline">M</span>enu</span>
        <Caret />
      </button>
      <Select label="Type Filter" value="No Selection Filter" className="ml-[11px] h-4 w-[113px]" />
      <Select label="Selection Scope" value="Within Work Part O" className="ml-2 h-4 w-[119px]" />
      <IconButton label="Detailed Filtering" className="ml-1 w-6">
        <Svg><path d="M2 3h4v9H2zM6 7h4v6H6z" fill="#eee" stroke={grey} /><circle cx="12" cy="5" r="3" stroke={grey} /></Svg>
      </IconButton>
      <IconButton label="Reset Filters" className="w-[22px]">
        <Svg><path d="M2 4h7l-3 4zM2 4V1M8 9h7l-3 3v3l-1-1v-2z" fill="#ddd" stroke={grey} /></Svg>
      </IconButton>
      <IconButton label="Point Filter" className="w-[23px]">
        <span className="flex size-4 items-center justify-center border border-[#d4554e] bg-white">
          <Svg w={13} h={13}><path d="M5 1v8M1 5h8" stroke="#555" strokeWidth="1.300" /><path d="M6 7h7l-3 3v3l-1-1v-2z" fill="#f2a83a" /></Svg>
        </span>
      </IconButton>
      <IconButton label="Point Filter list" className="w-[9px]"><Caret /></IconButton>
      <IconButton label="Undo Selection" className="w-6">
        <Svg><path d="M2 6c1-4 6-5 8-1M9 7v8M5 11h8M8 13l1 2 2-2M12 9l2 2-2 2" stroke={grey} strokeWidth="1.200" /></Svg>
      </IconButton>
      <IconButton label="Deselect All" className="w-6">
        <Svg><path d="M1 2l7 3M3 5l6 0M8 7h5v7H8zM8 9h5" stroke={grey} strokeWidth="1.200" /></Svg>
      </IconButton>
      <IconButton label="Rectangle Selection" className="w-[22px]">
        <Svg><path d="M2 2.500h12v11H2z" stroke="#999" strokeDasharray="2 1.500" /></Svg>
      </IconButton>
      <IconButton label="Selection shapes" className="w-3"><Caret /></IconButton>
      <IconButton label="Highlight Hidden" className="w-6">
        <Svg><path d="M1 9l4-6 6-1 4 4-1 6-5 2-7-1z" fill="#c9c9cc" stroke="#555" /><path d="M5 6l4-1 2 3-1 4M5 6l-1 5" stroke="#a44" /></Svg>
      </IconButton>
      <IconButton label="Allow Hidden" className="w-[22px]">
        <Svg>{smallCube("#cfe2fb", "#a8cdf5", "#6389e0")}</Svg>
      </IconButton>
      <Select label="Curve Rule" value="Infer Curves" className="ml-1.5 h-4 w-[119px]" disabled />
      <div className="ml-[3px] flex">
        {snapIcons.map((s) => <IconButton key={s.label} label={s.label} className={s.w}>{s.icon}</IconButton>)}
      </div>
      <div className="ml-1 flex h-5 border-x border-[#dadada] pr-1.5 pl-1.5">
        {viewIcons.map((v) => (
          <span key={v.label} className="flex items-center">
            <IconButton label={v.label} className={v.w}>{v.icon}</IconButton>
            {v.caretW && <IconButton label={`${v.label} list`} className={v.caretW}><Caret /></IconButton>}
          </span>
        ))}
      </div>
      <div className="flex flex-1 justify-end pt-1.5 pr-1"><Caret /></div>
    </div>
  );
}

function ResourceBar() {
  return (
    <aside className="flex w-[30px] shrink-0 flex-col border-r border-[#bdbdbd] bg-[#dadada]">
      <IconButton label="Resource Bar Options" className="h-[26px] w-[27px]">{gearIcon("#333", 13)}</IconButton>
      {resourceItems.map((r) => (
        <IconButton key={r.label} label={r.label} className={`pl-[3px] ${r.cls}`}>{r.icon}</IconButton>
      ))}
    </aside>
  );
}

function PartNavigator() {
  return (
    <section className="flex w-[193px] shrink-0 flex-col overflow-hidden bg-white pl-1.5">
      <h2 className="flex h-7 shrink-0 items-center pl-[3px]">Part Navigator</h2>
      <div className="flex min-h-0 flex-1 flex-col overflow-hidden border-t border-l border-[#d4d4d4] pl-px">
        <div className="flex h-[17px] shrink-0 items-center gap-4 bg-[#ededed] pl-[5px]">
          Name
          <Svg w={9} h={5}><path d="M0 5h9L4.500 0z" fill="#111" /></Svg>
        </div>
        <div className="min-h-0 flex-1 overflow-hidden">
          <ul className="grid h-[374px] auto-rows-fr">
            {nodes.map((n) => (
              <li key={n.label} className={`flex items-center border-b border-[#ececec] whitespace-nowrap even:bg-[#f8f8f8] ${n.child ? "gap-px pl-[25px]" : "gap-[3px] pl-1"} ${n.bold ? "font-bold" : ""}`}>
                {n.child ? (
                  <span className="-mr-0.5 h-full w-3 shrink-0 border-l border-dotted border-[#aaa]">
                    <span className="block h-1/2 border-b border-dotted border-[#aaa]" />
                  </span>
                ) : (
                  <span className="flex w-2.5 shrink-0 items-center justify-center">
                    {n.expand ? (
                      <button type="button" aria-label={`Toggle ${n.label}`} className="flex size-2 items-center justify-center bg-white text-[11px] leading-none font-bold">{n.expand}</button>
                    ) : (
                      <span className="ml-1 h-px w-full border-b border-dotted border-[#aaa]" />
                    )}
                  </span>
                )}
                {n.icons}
                <span>{n.label}</span>
              </li>
            ))}
            {emptyRows.map((i) => <li key={i} className="border-b border-[#ececec] even:bg-[#f8f8f8]" />)}
          </ul>
        </div>
        <div className="mb-0.5 flex h-[14px] shrink-0 bg-[#f0f0f0]">
          <IconButton label="Scroll left" className="w-4">
            <Svg w={5} h={8}><path d="M4 1L1 4l3 3" stroke="#333" strokeWidth="1.600" /></Svg>
          </IconButton>
          <div className="flex-1 bg-[#c9c9c9]" />
        </div>
      </div>
      <div className="h-[5px] shrink-0 border-y border-[#b0b0b0] bg-[#d8d8d8]" />
      {["Dependencies", "Details", "Preview"].map((name) => (
        <button key={name} type="button" className="flex h-[22px] shrink-0 items-center border-b border-[#c4c4c4] pl-1.5 text-xs text-[#1f6c85]">{name}</button>
      ))}
      <div className="h-[5px] shrink-0" />
    </section>
  );
}

function Section({ title, children }: { title: string; children: ReactNode }) {
  const [open, setOpen] = useState(true);
  return (
    <section className="shrink-0 border-b-2 border-[#d6d6d6] bg-white pr-[9px] pb-[7px] pl-2">
      <h3 className="flex h-[29px] text-xs text-[#1f6c85]">
        <button type="button" onClick={() => setOpen(!open)} className="-mr-1 flex flex-1 items-center justify-between pr-px">
          {title}
          <Svg w={10} h={8}><path d="M1 7l4-5.500L9 7" stroke="#1f6c85" strokeWidth="2" /></Svg>
        </button>
      </h3>
      {open && <div className="flex flex-col gap-0.5 pt-0.5">{children}</div>}
    </section>
  );
}

function Row({ label, id, children }: { label: string; id: string; children: ReactNode }) {
  return (
    <div className="flex items-center justify-between">
      <label htmlFor={id}>{label}</label>
      {children}
    </div>
  );
}

function Measure({ id, value, unit }: { id: string; value: string; unit: string }) {
  return (
    <div className="flex h-[21px] w-[132px] items-center border border-[#a6a6a6] bg-white pr-1 pl-1.5">
      <input id={id} defaultValue={value} className="w-[73px] outline-none" />
      <span className="flex-1">{unit}</span>
      <button type="button" aria-label={`${unit} options`}><Caret /></button>
    </div>
  );
}

const symIcon = (
  <Svg w={14} h={14}>
    <path d="M1 4l6-3 6 3v6l-6 3-6-3z" fill="#b9bcc8" stroke="#555" />
    <path d="M1 4l6 3 6-3M7 7v6M4 4v6M10 5v6" stroke="#555" strokeWidth=".8" />
    <path d="M4 5v5M2 8h5" stroke="#c33" strokeWidth="1.200" />
  </Svg>
);
const noneIcon = (
  <Svg w={14} h={14}>
    <circle cx="9" cy="9" r="4.200" fill="#2b9a80" stroke="#135a48" />
    <path d="M4 0l1 3 3-1-2 3 2 2-3 0-1 3-1-3-3 0 2-2-2-2 3 0z" fill="#f2ec3a" stroke="#8c9c20" strokeWidth=".6" />
  </Svg>
);

function ExtrudeDialog() {
  return (
    <section className="flex w-[300px] shrink-0 flex-col border-r border-[#d6d6d6] bg-[#efefef]">
      <header className="flex h-[23px] shrink-0 items-center bg-[#559fb5] pr-2 pl-[7px] text-white">
        {gearIcon("#fff")}
        <h2 className="flex-1 pl-2.5">Extrude</h2>
        <IconButton label="Reset" className="mr-1 w-4">
          <Svg w={12} h={12}><path d="M3.500 2.500a4.600 4.600 0 1 0 5 0" stroke="#fff" strokeWidth="1.800" /><path d="M1 1h5v5z" fill="#fff" /></Svg>
        </IconButton>
        <IconButton label="Close dialog" className="w-3">
          <Svg w={12} h={12}><path d="M1.500 1.500l9 9M10.500 1.500l-9 9" stroke="#fff" strokeWidth="2" /></Svg>
        </IconButton>
      </header>
      <div className="flex min-h-0 flex-1 pr-[5px] pl-[5px]">
        <div className="flex min-w-0 flex-1 flex-col overflow-hidden">
          <Section title="Direction">
            <div className="flex h-[29px] items-center">
              <span className="flex flex-1 items-center gap-1 pl-[3px]">{check()}Specify Vector</span>
              <IconButton label="Reverse Direction" className="h-[23px] w-[23px] border border-[#a6a6a6]">
                <Svg><path d="M1 2l14 12" stroke="#111" strokeWidth="1.200" /><path d="M4 12l8-8" stroke="#1a2fae" strokeDasharray="3 2" /><path d="M14 1l-1 5-4-3zM2 15l0-5 4 4z" fill="#1a2fae" /></Svg>
              </IconButton>
              <IconButton label="Vector Dialog" className="ml-px h-[23px] w-[23px] border border-[#a6a6a6]">
                <Svg><path d="M2 6c0 4 2 5 6 4" stroke="#e38a2c" strokeWidth="2" /><path d="M9 12V4" stroke="#c22" strokeWidth="1.300" /><path d="M6 5l3-5 3 5z" fill="#c22" /><path d="M6 7l4 3-4 3z" fill="#e38a2c" /><path d="M9 13h6" stroke="#111" strokeWidth="2" strokeDasharray="1.500 1" /></Svg>
              </IconButton>
              <div className="ml-0.5 flex h-[29px] border border-[#a6a6a6]">
                <IconButton label="ZC axis" className="w-[29px]">
                  <span className="mb-2.5 font-['Liberation_Sans'] text-xs font-bold text-[#111]">ZC</span>
                  <Svg w={7} h={18}><path d="M3.500 18V8" stroke="#2c6fd4" strokeWidth="2" /><path d="M0 10l3.500-7L7 10z" fill="#2457b8" /></Svg>
                </IconButton>
                <IconButton label="Vector types" className="w-[15px] border-l border-[#a6a6a6]"><Caret /></IconButton>
              </div>
            </div>
          </Section>
          <Section title="Limits">
            <Row label="End" id="end">
              <Select id="end" label="End" value="Symmetric Value" className="h-6 w-[132px]" icon={symIcon} />
            </Row>
            <Row label="Distance" id="distance">
              <Measure id="distance" value="115" unit="mm" />
            </Row>
            <label className="flex h-[19px] items-center gap-[5px]">
              <input type="checkbox" className="size-3 appearance-none border border-[#333] bg-white checked:bg-[#559fb5]" />
              Open Profile Smart Volume
            </label>
          </Section>
          <Section title="Boolean">
            <Row label="Boolean" id="boolean">
              <Select id="boolean" label="Boolean" value="None" className="h-6 w-[132px]" icon={noneIcon} />
            </Row>
          </Section>
          <Section title="Draft">
            <Row label="Draft" id="draft">
              <Select id="draft" label="Draft" value="From Section - Match" className="h-[21px] w-[132px]" />
            </Row>
            <Row label="Angle" id="angle">
              <Measure id="angle" value="-58" unit="deg" />
            </Row>
          </Section>
          <Section title="Offset">
            <Row label="Offset" id="offset">
              <Select id="offset" label="Offset" value="None" className="h-[21px] w-[132px]" />
            </Row>
          </Section>
          <Section title="Settings">
            <Row label="Body Type" id="body">
              <Select id="body" label="Body Type" value="Solid" className="h-[21px] w-[132px]" />
            </Row>
          </Section>
        </div>
        <div className="flex w-[15px] shrink-0 flex-col items-center bg-[#f1f1f1] pl-px">
          <IconButton label="Scroll up" className="h-6">
            <Svg w={8} h={6}><path d="M1 5l3-3.500L7 5" stroke="#333" strokeWidth="1.500" /></Svg>
          </IconButton>
          <div className="h-10" />
          <div className="min-h-0 w-full flex-1 bg-[#bfbfbf]" />
          <div className="h-[74px]" />
          <IconButton label="Scroll down" className="h-4">
            <Svg w={8} h={6}><path d="M1 1l3 3.500L7 1" stroke="#333" strokeWidth="1.500" /></Svg>
          </IconButton>
        </div>
      </div>
      <button type="button" aria-label="Collapse" className="mx-[5px] flex h-3 shrink-0 items-center justify-center border-b border-[#d2d2d2]"><Caret up /></button>
      <footer className="flex h-10 shrink-0 items-center justify-end gap-[5px] pr-3.5">
        <button type="button" className="h-[22px] w-[62px] bg-[#6fb4c6] text-white">{"< OK >"}</button>
        <button type="button" className="h-[22px] w-[62px] border border-[#a8a8a8] bg-[#dedede]">Apply</button>
        <button type="button" className="h-[22px] w-[62px] border border-[#a8a8a8] bg-[#dedede]">Cancel</button>
      </footer>
    </section>
  );
}

function Viewport() {
  return (
    <main className="relative min-w-0 flex-1 overflow-hidden bg-linear-to-b from-[#afb0b2] via-[#d3d4d5] via-50% to-[#e4e5e8] to-75%">
      <svg viewBox="523 174 757 504" preserveAspectRatio="xMinYMin slice" fill="none" className="block h-full w-full" role="img" aria-label="Part model">
        {/* lower body */}
        <path d="M523 417L672 362 745 393 720 588 523 498z" fill="#b8ccd2" />
        <path d="M523 417L672 362 686 367 523 423z" fill="#aabfc4" />
        <path d="M745 393L812 374 1055 485 720 588z" fill="#cbe4e8" />
        <path d="M523 417L672 362M523 498L720 588 1055 485M745 393L720 588" stroke="#3c4a50" />
        <path d="M812 374L830 378 960 441 1055 485z" fill="#8fa3a6" />
        <path d="M812 374L1055 485M828 379L1055 485" stroke="#2b3539" strokeWidth=".9" />
        {/* upper body */}
        <path d="M523 220L677 174H820L1055 283 812 374 745 393 523 295z" fill="#bcd4d9" />
        <path d="M688 364L742 348 757 354 703 371z" fill="#adc3c7" />
        <path d="M726 383L1055 283 900 340 815 372 745 393z" fill="#454f52" />
        <path d="M523 220L677 174M820 174L1055 283M523 295L726 384" stroke="#39464b" />
        <path d="M759 174L755 235 745 284" stroke="#a5b8bc" strokeWidth=".8" />
        {/* section */}
        <path d="M673 361L739 342 810 373 745 393z" stroke="#f0903f" strokeWidth="2.800" />
        {/* draft angle handle */}
        <circle r="1" transform="matrix(70 27 0 103.500 706 352)" stroke="#3f8fe0" strokeWidth="1.300" strokeDasharray="2 3" vectorEffect="non-scaling-stroke" />
        <path d="M652 264L698 219" stroke="#a59d78" />
        <path d="M705 250C686 241 663 247 647 270L654 280C665 261 684 255 705 263z" fill="#72add2" stroke="#3b92dc" />
        <path d="M705 250V351L648 271" stroke="#3b92dc" strokeWidth="1.300" />
        <path d="M643 269L651 261 650 272 646 274z" fill="#1262ab" />
        {/* vector */}
        <path d="M738 307L740 294 741 305z" fill="#8f9a9c" stroke="#8f9a9c" />
        <path d="M741 262V367" stroke="#94803f" strokeWidth="1.500" />
        <path d="M741 251L745 267H737z" fill="#94803f" stroke="#7d6b30" strokeWidth=".6" />
        {/* dimensions */}
        <path d="M744 340L756 336M749 341L822 373M806 372L828 369M750 396L772 406M768 403L828 384" stroke="#1e2427" strokeDasharray="5 1" />
        <path d="M748 339l7 2-2 3zM815 368l8 5-8-1zM767 403l7-4 1 3zM829 384l-9 1 1 3z" fill="#15191b" />
        <path d="M760 375L790 368M758 372L778 382M762 370l3 8" stroke="#cfd8da" strokeWidth="1.200" />
        <path d="M786 346l12 1-8 6z" fill="#e4e8e8" stroke="#9aa4a6" strokeWidth=".6" />
        <path d="M776 381l12 4-4 4z" fill="#b1543b" />
        <path d="M784 390l10-4M787 384l8 10M793 385l-6 9M802 359l8 3M808 364l8-1-4 5" stroke="#33282a" />
        {/* cursor */}
        <g transform="translate(621 236)">{moveArrows}</g>
      </svg>
      <div className="absolute top-6 left-[175px] flex h-[27px] w-[136px] items-center border border-[#a9adb0] bg-[#f0f0f0] pr-0.5 shadow-sm">
        <Svg w={8} h={22}>
          <path d="M3 2v19M6.500 2v19" stroke="#999" strokeWidth="1.500" strokeDasharray="1.500 2" />
        </Svg>
        <label htmlFor="angle-input" className="flex-1 pl-[9px]">Angle</label>
        <div className="flex h-5 w-[54px] items-center border border-[#a6a6a6] bg-white pr-1 pl-1">
          <input id="angle-input" defaultValue="-58" className="min-w-0 flex-1 outline-none" />
          <button type="button" aria-label="Angle options"><Caret /></button>
        </div>
      </div>
    </main>
  );
}

function StatusBar() {
  return (
    <footer className="grid h-[21px] shrink-0 grid-cols-[589px_1fr_auto] items-center border-t border-[#bdbdbd] bg-white pb-px font-bold">
      <span className="pl-0.5">Select section geometry</span>
      <span>Angle</span>
      <span className="flex gap-1 pr-[51px]">
        <Svg w={15} h={15}>
          <path d="M.5.500h14v14H.5z" fill="#e2e2e2" stroke="#bbb" />
          <path d="M3 4l3 4M6 4l-2 7M8 4l4 7M12 4L8 11M3 8h9" stroke="#999" />
        </Svg>
        <Svg w={15} h={15}>
          <path d="M.5 4V.500H4M11 .5h3.500V4M14.500 11v3.500H11M4 14.500H.5V11" stroke="#888" />
          <path d="M3.500 3.500h8v8h-8z" fill="#fff" stroke="#666" />
          <path d="M5 6h5v4H5z" fill="#5b84c4" />
        </Svg>
      </span>
    </footer>
  );
}

export default function App() {
  return (
    <div className="flex h-screen flex-col overflow-hidden bg-black pt-[17px] pb-[21px] font-['Open_Sans',sans-serif] text-[11px] text-[#2b2b2b]">
      <TitleBar />
      <TabBar />
      <Ribbon />
      <SelectionBar />
      <div className="flex min-h-0 flex-1 border-t border-[#a9a9a9]">
        <ResourceBar />
        <PartNavigator />
        <ExtrudeDialog />
        <Viewport />
      </div>
      <StatusBar />
    </div>
  );
}
